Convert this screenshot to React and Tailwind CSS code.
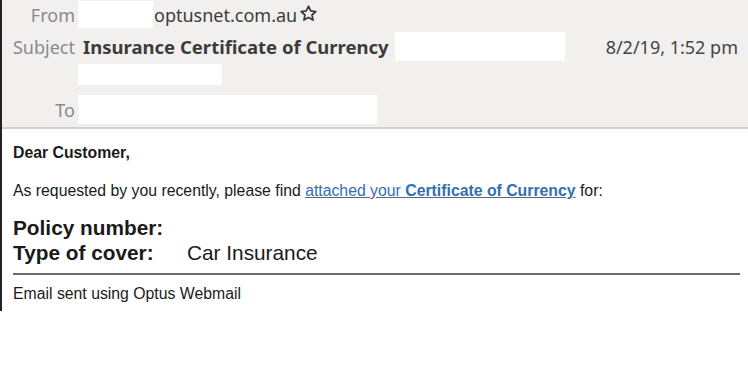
import React from 'react';

const Star = () => (
  <svg width="19" height="19" viewBox="0 0 24 24" fill="none" stroke="#3a3a3a" strokeWidth="2.2" strokeLinejoin="round">
    <path d="M12 2.8l2.8 6 6.5.7-4.9 4.4 1.4 6.4L12 17l-5.8 3.3 1.4-6.4-4.9-4.4 6.5-.7z" />
  </svg>
);

const Label = ({ children }) => (
  <div className="w-[74px] shrink-0 text-right pr-[1px] text-[#8a8a8a]">{children}</div>
);

export default function App() {
  return (
    <div className="w-[748px] h-[387px] bg-white">
      <div className="border-l-2 border-[#222] h-[311px]">
        <div className="bg-[#f1f0ef] h-[129px] border-b-2 border-[#cfcfcf] text-[18px] leading-[24px] text-[#3c3c3c] font-['Noto_Sans',sans-serif]">
          <div className="flex items-center h-[29px]">
            <Label>From</Label>
            <div className="ml-[2px] w-[75px] h-[27px] bg-white" />
            <span className="ml-[1px]">optusnet.com.au</span>
            <span className="ml-[2px] mt-[-2px]"><Star /></span>
          </div>
          <div className="flex items-center h-[35px]">
            <Label>Subject</Label>
            <span className="ml-[7px] font-bold text-[18.5px]">Insurance Certificate of Currency</span>
            <div className="ml-[6px] w-[170px] h-[29px] bg-white" />
            <span className="ml-auto mr-[10px] text-[#444]">8/2/19, 1:52 pm</span>
          </div>
          <div className="pl-[76px] h-[23px]">
            <div className="w-[144px] h-[21px] bg-white" />
          </div>
          <div className="flex items-center mt-[8px]">
            <Label>To</Label>
            <div className="ml-[2px] w-[299px] h-[29px] bg-white" />
          </div>
        </div>
        <div className="pl-[11px] pr-[7px] pt-[14px] font-['Liberation_Sans',Arial,sans-serif] text-[#1a1a1a] text-[15.8px] leading-[19px]">
          <div className="font-bold">Dear Customer,</div>
          <div className="mt-[19px]">
            As requested by you recently, please find{' '}
            <a href="#" className="text-[#2f6fb3] underline">attached your <b>Certificate of Currency</b></a> for:
          </div>
          <div className="mt-[15px] text-[20.8px] leading-[25px]">
            <div className="font-bold">Policy number:</div>
            <div className="flex">
              <span className="font-bold w-[174px]">Type of cover:</span>
              <span>Car Insurance</span>
            </div>
          </div>
          <div className="mt-[8px] h-[2px] bg-[#6a6a6a] mr-[1px]" />
          <div className="mt-[9px]">Email sent using Optus Webmail</div>
        </div>
      </div>
    </div>
  );
}
